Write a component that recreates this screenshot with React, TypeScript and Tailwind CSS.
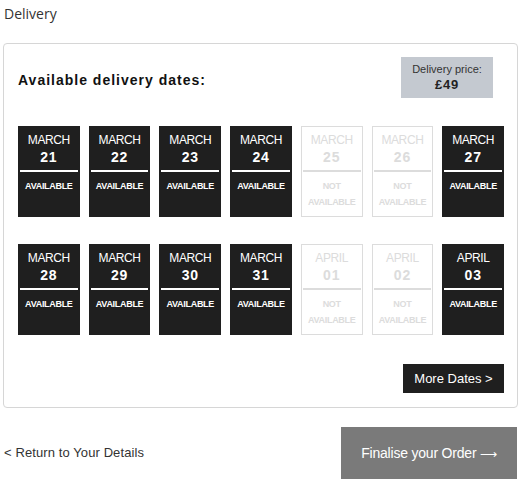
type Day = { month: string; day: string; available: boolean }

const rows: Day[][] = [
  [
    { month: 'MARCH', day: '21', available: true },
    { month: 'MARCH', day: '22', available: true },
    { month: 'MARCH', day: '23', available: true },
    { month: 'MARCH', day: '24', available: true },
    { month: 'MARCH', day: '25', available: false },
    { month: 'MARCH', day: '26', available: false },
    { month: 'MARCH', day: '27', available: true },
  ],
  [
    { month: 'MARCH', day: '28', available: true },
    { month: 'MARCH', day: '29', available: true },
    { month: 'MARCH', day: '30', available: true },
    { month: 'MARCH', day: '31', available: true },
    { month: 'APRIL', day: '01', available: false },
    { month: 'APRIL', day: '02', available: false },
    { month: 'APRIL', day: '03', available: true },
  ],
]

function DateTile({ d }: { d: Day }) {
  const on = d.available
  return (
    <div
      className={
        on
          ? 'h-[91px] bg-[#1f1f1f] text-white flex flex-col items-center pt-[7px] px-[2px]'
          : 'h-[91px] bg-white text-[#dcdcdc] border border-[#dcdcdc] flex flex-col items-center pt-[6px] px-[1px]'
      }
    >
      <span className="text-[12px] leading-[15px] tracking-[-0.4px]">{d.month}</span>
      <span className="text-[14px] leading-[18px] font-bold tracking-[0.8px]">{d.day}</span>
      <div className={on ? 'w-full h-[2px] mt-[4px] bg-white' : 'w-full h-[2px] mt-[4px] bg-[#dcdcdc]'} />
      <span className="text-[9px] font-bold leading-[16px] mt-[6px] text-center tracking-[-0.3px]">
        {on ? 'AVAILABLE' : (
          <>
            NOT
            <br />
            AVAILABLE
          </>
        )}
      </span>
    </div>
  )
}

export default function App() {
  return (
    <div className="w-[523px] h-[486px] bg-white font-['Liberation_Sans',Arial,sans-serif] text-[#222]">
      <div className="px-[4px] pt-[3px] h-[43px] text-[14px] text-[#333] font-['Open_Sans',sans-serif]">Delivery</div>

      <div className="mx-[3px] w-[515px] h-[365px] border border-[#d6d6d6] rounded-[4px] px-[14px] pt-[13px]">
        <div className="flex items-start justify-between">
          <h2 className="pt-[13px] text-[14px] font-bold tracking-[1px] text-[#111]">Available delivery dates:</h2>
          <div className="w-[92px] h-[41px] bg-[#c4c9d0] flex flex-col items-center justify-center mr-[10px]">
            <span className="text-[11px] leading-[14px] text-[#333]">Delivery price:</span>
            <span className="text-[13px] leading-[17px] font-bold tracking-[0.8px] text-[#222]">£49</span>
          </div>
        </div>

        <div className="mt-[28px] flex flex-col gap-[27px] w-[486px]">
          {rows.map((row, i) => (
            <div key={i} className="grid grid-cols-7 gap-x-[9px]">
              {row.map(d => (
                <DateTile key={d.month + d.day} d={d} />
              ))}
            </div>
          ))}
        </div>

        <div className="flex justify-end mt-[29px] w-[486px]">
          <button className="w-[101px] h-[29px] bg-[#1f1f1f] text-white text-[13px]">More Dates &gt;</button>
        </div>
      </div>

      <div className="flex items-center justify-between mt-[19px] pl-[4px] pr-[6px]">
        <span className="text-[13px] text-[#333] tracking-[0.1px]">&lt; Return to Your Details</span>
        <button className="w-[176px] h-[52px] bg-[#7a7a7a] text-white text-[14px] tracking-[-0.2px]">
          Finalise your Order <span className="text-[12px]">⟶</span>
        </button>
      </div>
    </div>
  )
}
